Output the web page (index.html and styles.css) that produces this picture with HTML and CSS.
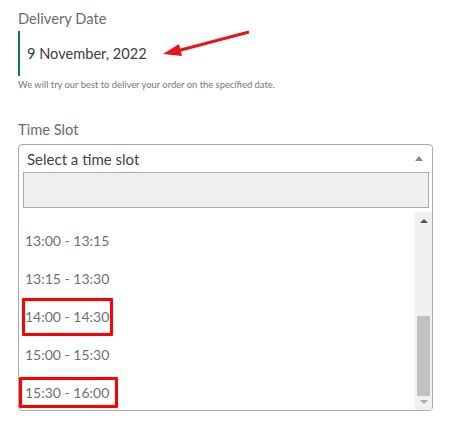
FILE: index.html
```html
<!DOCTYPE html>
<html lang="en">
<head>
    <meta charset="UTF-8">
    <title>Delivery Date</title>
    <link rel="stylesheet" href="styles.css">
</head>
<body>
    <div class="form">
        <div class="field">
            <label class="label">Delivery Date</label>
            <div class="date-box">9 November, 2022</div>
            <p class="hint">We will try our best to deliver your order on the specified date.</p>
        </div>

        <div class="field slot-field">
            <label class="label">Time Slot</label>
            <div class="select">
                <div class="select-head">
                    <span>Select a time slot</span>
                    <span class="caret"></span>
                </div>
                <div class="search"></div>
                <div class="results">
                    <ul class="options">
                        <li>13:00 - 13:15</li>
                        <li>13:15 - 13:30</li>
                        <li class="mark mark-a">14:00 - 14:30</li>
                        <li>15:00 - 15:30</li>
                        <li class="mark mark-b">15:30 - 16:00</li>
                    </ul>
                    <div class="scrollbar">
                        <span class="arrow-up"></span>
                        <div class="track"><div class="thumb"></div></div>
                        <span class="arrow-down"></span>
                    </div>
                </div>
            </div>
        </div>
    </div>

    <svg class="pointer" width="100" height="40" viewBox="0 0 100 40">
        <line x1="92" y1="4" x2="20" y2="23" stroke="#e8141b" stroke-width="3"/>
        <polygon points="6,26 22,16 25,28" fill="#e8141b"/>
    </svg>
</body>
</html>
```

FILE: styles.css
```css
body {
    margin: 0;
    font-family: Lato, "Open Sans", sans-serif;
    background-color: white;
    color: #666;
}
.form {
    padding: 8px 21px 0 18px;
}
.label {
    display: block;
    font-size: 14.7px;
    line-height: 20px;
    color: #6b6b6b;
}
.date-box {
    margin-top: 3px;
    height: 45px;
    border-left: 2px solid #0b7a4b;
    padding-left: 7px;
    display: flex;
    align-items: center;
    font-size: 14.6px;
    color: #3c3c3c;
}
.hint {
    margin: 2px 0 0 0;
    font-size: 9.4px;
    line-height: 14px;
    color: #777;
}
.slot-field {
    margin-top: 27px;
}
.select {
    margin-top: 5px;
    border: 1px solid #aaa;
    border-radius: 4px;
    overflow: hidden;
}
.select-head {
    height: 27px;
    padding: 0 8px;
    display: flex;
    align-items: center;
    justify-content: space-between;
    font-size: 15px;
    color: #444;
}
.caret {
    width: 0;
    height: 0;
    border-left: 4px solid transparent;
    border-right: 4px solid transparent;
    border-bottom: 5px solid #888;
    margin-right: 1px;
}
.search {
    margin: 0 3px 0 4px;
    height: 34px;
    border: 1px solid #aaa;
    background-color: #f0f0f0;
}
.results {
    margin-top: 4px;
    height: 198px;
    display: flex;
}
.options {
    flex: 1;
    list-style: none;
    margin: 0;
    padding: 10px 0 0 0;
}
.options li {
    position: relative;
    height: 38px;
    line-height: 38px;
    padding-left: 6px;
    font-size: 14px;
    color: #707070;
}
.mark::after {
    content: "";
    position: absolute;
    border: 3px solid #f00;
    border-radius: 1px;
}
.mark-a::after {
    left: 3px;
    top: 0;
    width: 85px;
    height: 32px;
}
.mark-b::after {
    left: 0;
    top: 3px;
    width: 93px;
    height: 25px;
}
.scrollbar {
    width: 17px;
    background-color: #f0f0f0;
    display: flex;
    flex-direction: column;
    align-items: center;
}
.arrow-up,
.arrow-down {
    width: 0;
    height: 0;
    border-left: 4px solid transparent;
    border-right: 4px solid transparent;
}
.arrow-up {
    margin: 7px 0 6px;
    border-bottom: 4px solid #555;
}
.arrow-down {
    margin: 4px 0 6px;
    border-top: 4px solid #aaa;
}
.track {
    flex: 1;
    width: 13px;
    display: flex;
    flex-direction: column;
    justify-content: flex-end;
}
.thumb {
    height: 80px;
    background-color: #c1c1c1;
}
.pointer {
    position: absolute;
    left: 157px;
    top: 28px;
}
```
